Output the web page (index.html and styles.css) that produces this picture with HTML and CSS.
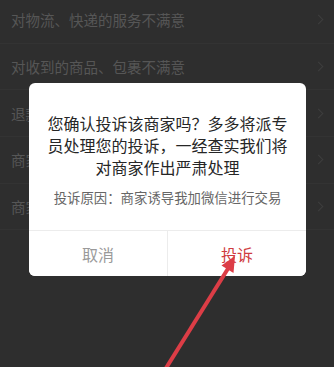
FILE: index.html
```html
<!DOCTYPE html>
<html lang="zh">
<head>
<meta charset="utf-8">
<link rel="stylesheet" href="styles.css">
</head>
<body>
<div class="page">
  <ul class="list">
    <li class="row"><span>对物流、快递的服务不满意</span><i class="chev"></i></li>
    <li class="row"><span>对收到的商品、包裹不满意</span><i class="chev"></i></li>
    <li class="row"><span>退款</span><i class="chev"></i></li>
    <li class="row"><span>商家</span><i class="chev"></i></li>
    <li class="row"><span>商家</span><i class="chev"></i></li>
  </ul>
  <div class="dialog">
    <div class="body">
      <p class="msg">您确认投诉该商家吗？多多将派专员处理您的投诉，一经查实我们将对商家作出严肃处理</p>
      <p class="reason">投诉原因：商家诱导我加微信进行交易</p>
    </div>
    <div class="actions">
      <button class="btn cancel">取消</button>
      <button class="btn confirm">投诉</button>
    </div>
  </div>
  <svg class="arrow" width="334" height="367" viewBox="0 0 334 367">
    <line x1="158" y1="381" x2="229" y2="267" stroke="#dc3d46" stroke-width="4"/>
    <polygon points="235,256 233.5,273 221.5,265.5" fill="#dc3d46"/>
  </svg>
</div>
</body>
</html>
```
FILE: styles.css
```css
* { box-sizing: border-box; }
html, body { margin: 0; padding: 0; }
body {
  background: #2e2e2e;
  font-family: "Noto Sans CJK SC", "Noto Sans", sans-serif;
}
.page {
  position: relative;
  width: 334px;
  height: 367px;
  overflow: hidden;
  background: #2e2e2e;
}
.list {
  list-style: none;
  margin: -3px 0 0;
  padding: 0;
}
.row {
  height: 46.67px;
  display: flex;
  align-items: center;
  justify-content: space-between;
  padding: 0 10px 0 11px;
  border-bottom: 1px solid #333333;
  color: #565656;
  font-size: 14.5px;
}
.chev {
  width: 7px;
  height: 7px;
  border-top: 1.2px solid #3e3e3e;
  border-right: 1.2px solid #3e3e3e;
  transform: rotate(45deg);
  margin-right: 2px;
}
.dialog {
  position: absolute;
  left: 29px;
  top: 83px;
  width: 277px;
  height: 193px;
  background: #fff;
  border-radius: 6px;
  display: flex;
  flex-direction: column;
  overflow: hidden;
}
.body {
  flex: 1;
  padding: 29px 16px 0;
  text-align: center;
}
.msg {
  margin: 0;
  font-size: 16px;
  line-height: 22px;
  color: #262626;
}
.reason {
  margin: 10px 0 0;
  font-size: 13.4px;
  line-height: 18px;
  color: #666666;
}
.actions {
  height: 46px;
  display: flex;
  border-top: 1px solid #ececec;
}
.btn {
  flex: 1;
  border: 0;
  background: #fff;
  font-family: inherit;
  font-size: 16px;
  padding: 0;
}
.cancel { color: #9a9a9a; border-right: 1px solid #ececec; }
.confirm { color: #cf3b40; }
.arrow {
  position: absolute;
  left: 0;
  top: 0;
}
```
